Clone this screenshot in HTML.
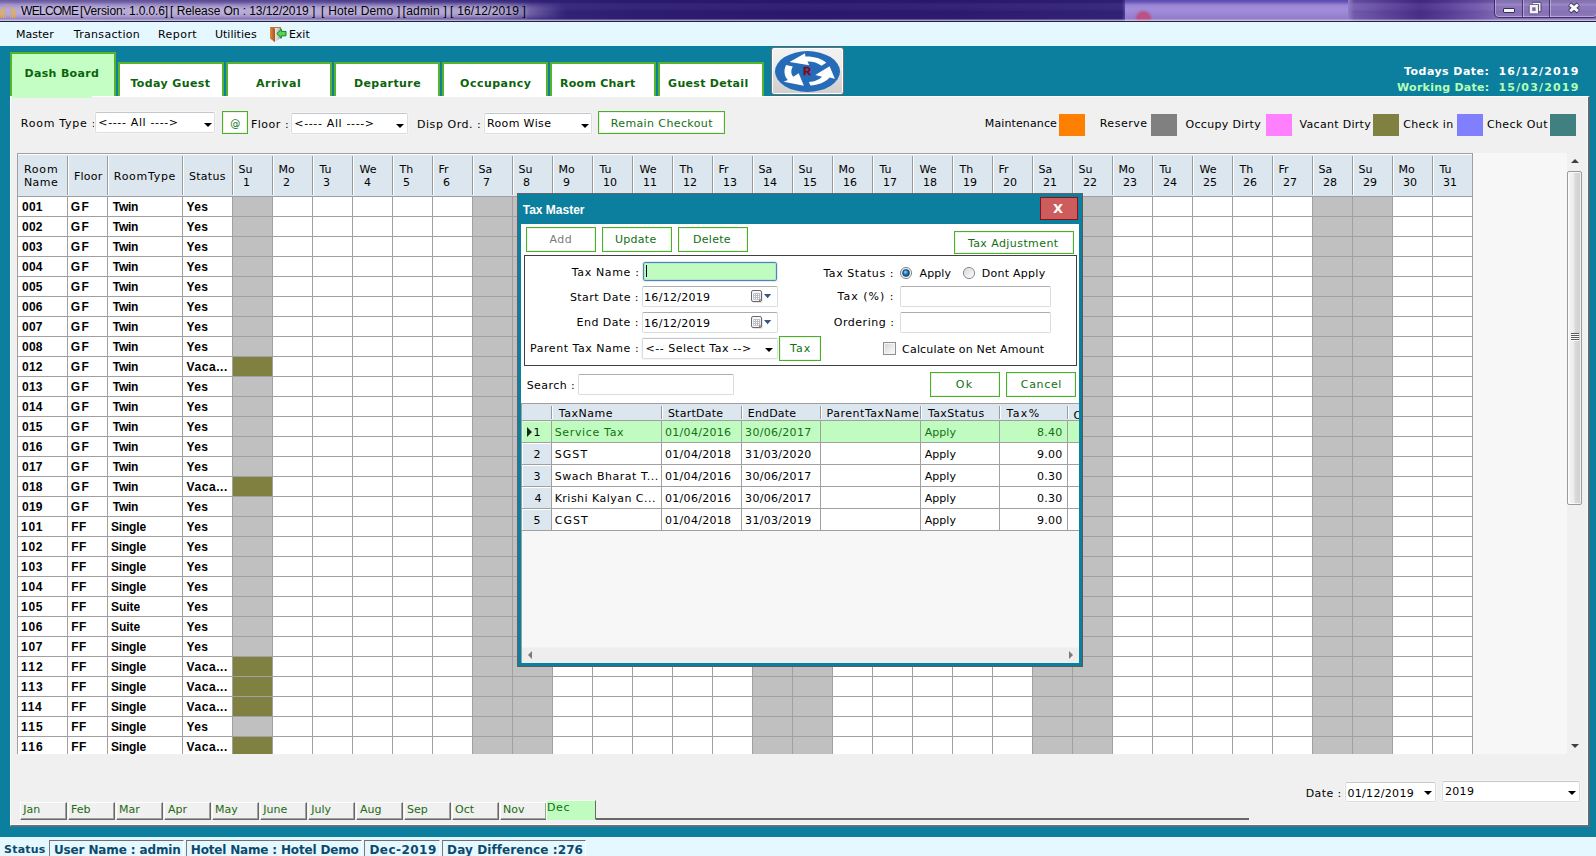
<!DOCTYPE html>
<html lang="en"><head><meta charset="utf-8"><title>WELCOME - Hotel Demo</title>
<style>
*{box-sizing:border-box;margin:0;padding:0}
html,body{width:1596px;height:856px;overflow:hidden}
body{background:#0c7e9e;font-family:"DejaVu Sans","Liberation Sans",sans-serif;font-size:11px;color:#000;position:relative}
.a{position:absolute;white-space:pre}
.t{position:absolute;white-space:pre;line-height:14px;height:14px}
.b{font-weight:bold}
.f12{font-size:12px}
.f10{font-size:10px}
.sq{transform:scaleY(.917)}
.lib{font-family:"Liberation Sans",sans-serif}
#title{left:0;top:0;width:1596px;height:21px;overflow:hidden;background:
 linear-gradient(180deg,rgba(20,10,80,.25) 0,rgba(20,10,80,.12) 3px,rgba(255,255,255,.04) 4px,rgba(255,255,255,.02) 10px,rgba(0,0,0,.06) 11px,rgba(0,0,0,.02) 21px),
 linear-gradient(90deg,#8575b8 0,#7767ad 8%,#6656a2 16%,#554595 24%,#44348a 30%,#36267e 34%,#2f1e76 40%,#2c1a70 50%,#2e1c72 60%,#33227a 68%,#35247c 70.3%,#5a45a0 70.5%,#6a4fa8 84.3%,#7a62b4 84.5%,#5b3f98 87.5%,#4b3089 89%,#5a3e98 90.5%,#7257ac 92.5%,#8870ba 94%,#8a73bb 100%)}
#tline{left:0;top:21px;width:1596px;height:1px;background:#262040}
#menu{left:0;top:22px;width:1596px;height:24px;background:#e5f7ff}
#status{left:0;top:837px;width:1596px;height:19px;background:#e5f7ff}
#panel{left:10px;top:96px;width:1580px;height:730px;background:#f0f0f0;border-right:2px solid #696969;border-right-color:#5a6a70;border-bottom:1px solid #707070;border-top:1px solid #fff;border-left:1px solid #fff;box-shadow:inset -1px -1px 0 #fafafa,0 1px 0 #4a7686}
.tab{position:absolute;top:62px;width:106px;height:35px;background:#fff;border:2px solid #57b22e;border-bottom:none}
.gbtn{position:absolute;background:#fff;border:1px solid #4caf2c;box-shadow:inset 0 0 0 1px #eaf6e4}
.combo{position:absolute;background:#fff;border:1px solid #dadde2;border-top-color:#c3c6cc;border-radius:2px;box-shadow:0 0 0 1px #f5f5f5}
.arr{position:absolute;width:0;height:0;border-left:4px solid transparent;border-right:4px solid transparent;border-top:4px solid #000}
.sw{position:absolute;width:26px;height:22px;top:114px}
#grid{left:17px;top:153px;width:1565px;height:601px;background:#f7f7f7;overflow:hidden}
.hs{position:absolute;top:3px;width:2px;height:39px;border-left:1px solid #9a9a9a;border-right:1px solid #fff}
.wk{position:absolute;top:44px;width:39px;height:560px;background:#c0c0c0}
.ol{position:absolute;left:216px;width:39px;height:19px;background:#808040}
#dlg{left:517px;top:193px;width:566px;height:474px;background:#0c7e9e;border-left:1px solid #56666c;border-top:1px solid #5f6668;border-right:1px solid #5a5a5a;border-bottom:1px solid #5a5a5a}
.inp{position:absolute;background:#fff;border:1px solid #d9dce1;border-top-color:#abadb3;border-radius:2px}
.dhs{position:absolute;top:2px;width:2px;height:13px;border-left:1px solid #9a9a9a;border-right:1px solid #fff}
.dc{position:absolute;height:22px;border-right:1px solid #a0a0a0;border-bottom:1px solid #a0a0a0;background:#fff}
.mt{position:absolute;top:802px;width:47px;height:18px;border-top:1px solid #fff;border-left:1px solid #fff;border-right:1px solid #696969;border-bottom:1px solid #696969;box-shadow:inset -1px -1px 0 #a0a0a0}
.sb{position:absolute;top:840px;height:17px;border-top:1px solid #6e6e6e;border-left:1px solid #7a7a7a;border-right:1px solid #fff}
</style></head>
<body>
<header aria-label="Window title bar">
<div class="a" id="title"></div><div class="a" id="tline"></div>
<div class="a" style="left:0;top:0;width:1596px;height:21px;overflow:hidden"><div class="a" style="left:-20px;top:5px;width:585px;height:13px;background:linear-gradient(90deg,#b9abd9 0,#b5a7d6 60%,#ad9fd0 88%,rgba(150,135,195,.5) 95%,rgba(120,105,175,0) 100%);filter:blur(2.5px)"></div><div class="a" style="left:1125px;top:0;width:223px;height:21px;background:linear-gradient(180deg,#5848b0 0,#6a58b8 2px,#9884d2 5px,#a28edb 9px,#9c88d4 13px,#917cc8 19px)"></div><div class="a" style="left:1348px;top:0;width:6px;height:21px;background:linear-gradient(90deg,#917cc8,rgba(110,85,170,0))"></div><div class="a" style="left:1137px;top:12px;width:13px;height:13px;border-radius:7px;background:#c04a7a;box-shadow:0 0 3px 1px #c04a7a;opacity:.85"></div><div class="a" style="left:0;top:19px;width:1596px;height:1px;background:rgba(225,218,245,.3)"></div><div class="a" style="left:0;top:20px;width:1596px;height:1px;background:rgba(225,218,245,.7)"></div></div>
<svg class="a" style="left:0;top:2px" width="16" height="17" viewBox="0 0 16 17"><g stroke="#f5b116" stroke-width="1"><line x1="1.5" y1="16" x2="1.5" y2="8"/><line x1="3.5" y1="16" x2="3.5" y2="6"/><line x1="12.5" y1="16" x2="12.5" y2="6"/><line x1="14.5" y1="16" x2="14.5" y2="8"/></g><g stroke="#d9a94e" stroke-width="1" opacity=".8"><line x1="5.5" y1="16" x2="5.5" y2="4"/><line x1="10.5" y1="16" x2="10.5" y2="4"/></g><rect x="6" y="2" width="1" height="1" fill="#e8b040"/><rect x="9" y="2" width="1" height="1" fill="#e8b040"/></svg>
<div class="t lib f12" style="left:21.1px;top:4px;letter-spacing:-0.70px;text-shadow:0 0 4px rgba(255,255,255,.55);">WELCOME</div>
<div class="t lib f12" style="left:80.1px;top:4px;letter-spacing:-0.12px;text-shadow:0 0 4px rgba(255,255,255,.55);">[Version: 1.0.0.6]</div>
<div class="t lib f12" style="left:170.1px;top:4px;letter-spacing:-0.06px;text-shadow:0 0 4px rgba(255,255,255,.55);">[ Release On : 13/12/2019 ]</div>
<div class="t lib f12" style="left:321.1px;top:4px;letter-spacing:0.19px;text-shadow:0 0 4px rgba(255,255,255,.55);">[ Hotel Demo ]</div>
<div class="t lib f12" style="left:402.6px;top:4px;letter-spacing:0.21px;text-shadow:0 0 4px rgba(255,255,255,.55);">[admin ]</div>
<div class="t lib f12" style="left:450.1px;top:4px;letter-spacing:0.19px;text-shadow:0 0 4px rgba(255,255,255,.55);">[ 16/12/2019 ]</div>
<div class="a" style="left:1494px;top:-5px;width:104px;height:23px;border:1px solid rgba(40,28,80,.8);border-radius:0 0 5px 5px;box-shadow:inset 0 0 0 1px rgba(255,255,255,.35);background:linear-gradient(180deg,rgba(255,255,255,.18),rgba(255,255,255,.10) 45%,rgba(255,255,255,.0) 50%,rgba(255,255,255,.08))"></div>
<div class="a" style="left:1522px;top:0;width:2px;height:17px;border-left:1px solid rgba(40,28,80,.7);border-right:1px solid rgba(255,255,255,.35)"></div><div class="a" style="left:1549px;top:0;width:2px;height:17px;border-left:1px solid rgba(40,28,80,.7);border-right:1px solid rgba(255,255,255,.35)"></div>
<div class="a" style="left:1503px;top:8px;width:12px;height:5px;background:#f4f4f4;border:1px solid #35305a;border-radius:1px"></div>
<svg class="a" style="left:1528px;top:1px" width="14" height="14" viewBox="0 0 14 14"><path d="M4.6 2.4h7.2v7.2h-1.6" fill="none" stroke="#2e2850" stroke-width="3.2" stroke-linejoin="round" opacity=".85"/><path d="M4.8 2.5h6.9v7h-1.4" fill="none" stroke="#f4f4f4" stroke-width="1.7"/><rect x="2.9" y="5" width="6" height="6.2" fill="none" stroke="#2e2850" stroke-width="4.2" stroke-linejoin="round" opacity=".85"/><rect x="2.9" y="5" width="6" height="6.2" fill="#7a66b4" stroke="#f4f4f4" stroke-width="2.6"/></svg>
<svg class="a" style="left:1567px;top:2px" width="14" height="12" viewBox="0 0 14 12"><path d="M2.6 2.2l8.8 7.4M11.4 2.2l-8.8 7.4" stroke="#2e2850" stroke-width="4.8" stroke-linecap="butt" opacity=".85"/><path d="M3.1 2.6l7.8 6.6M10.9 2.6l-7.8 6.6" stroke="#f8f8f8" stroke-width="3" stroke-linecap="butt"/></svg>
</header>
<nav aria-label="Main menu">
<div class="a" id="menu"></div>
<div class="t" style="left:15.9px;top:28px;letter-spacing:0.04px;">Master</div>
<div class="t" style="left:73.8px;top:28px;letter-spacing:0.31px;">Transaction</div>
<div class="t" style="left:158.0px;top:28px;letter-spacing:0.44px;">Report</div>
<div class="t" style="left:214.9px;top:28px;letter-spacing:0.04px;">Utilities</div>
<div class="t" style="left:288.9px;top:28px;">Exit</div>
<svg class="a" style="left:269px;top:26px" width="18" height="17" viewBox="0 0 18 17"><defs><linearGradient id="dg" x1="0" y1="0" x2="1" y2="0"><stop offset="0" stop-color="#f4f6f8"/><stop offset="1" stop-color="#aab4be"/></linearGradient><linearGradient id="dd" x1="0" y1="0" x2="1" y2="0"><stop offset="0" stop-color="#e08a3c"/><stop offset="1" stop-color="#a8541a"/></linearGradient></defs><rect x="1" y="1" width="11" height="11.6" fill="#d0742c"/><path d="M5 2h6v10.6l-5 3.4-1-.4z" fill="url(#dg)"/><path d="M1 1l5 1.6v13.6L1 12.6z" fill="url(#dd)"/><path d="M17 5.4h-4.6V3.2L7.8 7.6l4.6 4.4V9.8H17z" fill="#5fd05a" stroke="#0a8a12" stroke-width="1"/></svg>
</nav>
<section aria-label="Tabs and dates">
<div class="tab" style="left:10px;top:52px;width:106px;height:46px;background:#c5fec5"></div>
<div class="tab" style="left:118px"></div>
<div class="tab" style="left:226px"></div>
<div class="tab" style="left:334px"></div>
<div class="tab" style="left:442px"></div>
<div class="tab" style="left:550px"></div>
<div class="tab" style="left:658px"></div>
<div class="t b" style="left:24.6px;top:67px;letter-spacing:0.31px;color:#0b640b;">Dash Board</div>
<div class="t b" style="left:130.4px;top:77px;letter-spacing:0.40px;color:#0b640b;">Today Guest</div>
<div class="t b" style="left:255.9px;top:77px;letter-spacing:0.58px;color:#0b640b;">Arrival</div>
<div class="t b" style="left:353.9px;top:77px;letter-spacing:0.44px;color:#0b640b;">Departure</div>
<div class="t b" style="left:460.1px;top:77px;letter-spacing:0.47px;color:#0b640b;">Occupancy</div>
<div class="t b" style="left:560.1px;top:77px;letter-spacing:0.25px;color:#0b640b;">Room Chart</div>
<div class="t b" style="left:668.1px;top:77px;letter-spacing:0.30px;color:#0b640b;">Guest Detail</div>
<div class="a" style="left:771px;top:47px;width:73px;height:48px;border:1px solid #707070;border-radius:3px;background:linear-gradient(180deg,#f2f2f2 0,#ebebeb 48%,#dddddd 52%,#cfcfcf 100%);box-shadow:inset 0 0 0 1px #fcfcfc"></div>
<svg class="a" style="left:774px;top:49.7px" width="67" height="43" viewBox="0 0 67 43"><ellipse cx="33.5" cy="21.5" rx="32.5" ry="20.4" fill="#256bb7"/><g fill="#fff"><path d="M15.6 12 L31 3.3 L31.4 6.5 C40 6.3 47.5 8.5 52.3 12.8 L47.5 15.7 C43.5 12.6 38.5 11.2 33.4 11.4 L35.3 15.3 Z"/><path d="M55.6 16.2 L60.9 28.8 L55.6 27.6 C51.5 32.5 44 35.2 36.4 35.5 L34.9 32 C40.5 31.5 45.5 29.5 48 26.7 L41.3 25 Z"/><path d="M29.9 35.8 L9.7 31.7 L13.8 29.9 C10 26 9.5 20 12.1 15 L18.8 16.5 C16.5 20.5 17 24.5 19.4 26.7 L24.7 23.2 Z"/></g><text x="29.2" y="25.4" font-family="Liberation Sans,sans-serif" font-weight="bold" font-size="10.6" fill="#85081a" stroke="#85081a" stroke-width=".5">R</text></svg>
<div class="t b" style="left:1404.1px;top:65px;letter-spacing:0.45px;color:#fff;">Todays Date:</div>
<div class="t b" style="left:1498.5px;top:65px;letter-spacing:1.17px;color:#fff;">16/12/2019</div>
<div class="t b" style="left:1397.1px;top:81px;letter-spacing:0.25px;color:#b4ffb4;">Working Date:</div>
<div class="t b" style="left:1498.5px;top:81px;letter-spacing:1.17px;color:#b4ffb4;">15/03/2019</div>
</section>
<main aria-label="Dash Board">
<div class="a" id="panel"></div>
<div class="a" style="left:12px;top:96px;width:80px;height:2px;background:#c5fec5"></div>
<div class="t" style="left:20.8px;top:117px;letter-spacing:0.74px;">Room Type :</div>
<div class="combo" style="left:95px;top:112px;width:120px;height:21px"></div><div class="arr" style="left:204px;top:123px"></div>
<div class="t" style="left:98.3px;top:116px;letter-spacing:0.64px;">&lt;---- All ----&gt;</div>
<div class="gbtn" style="left:222px;top:111px;width:26px;height:23px"></div>
<div class="t f10" style="left:230.2px;top:117px;color:#127012;">@</div>
<div class="t" style="left:250.9px;top:118px;letter-spacing:0.53px;">Floor :</div>
<div class="combo" style="left:291px;top:113px;width:117px;height:21px"></div><div class="arr" style="left:396px;top:124px"></div>
<div class="t" style="left:294.3px;top:117px;letter-spacing:0.64px;">&lt;---- All ----&gt;</div>
<div class="t" style="left:417.0px;top:118px;letter-spacing:0.54px;">Disp Ord. :</div>
<div class="combo" style="left:484px;top:113px;width:108px;height:21px"></div><div class="arr" style="left:581px;top:124px"></div>
<div class="t" style="left:486.9px;top:117px;letter-spacing:0.38px;">Room Wise</div>
<div class="gbtn" style="left:598px;top:111px;width:127px;height:23px"></div>
<div class="t" style="left:610.7px;top:117px;letter-spacing:0.39px;color:#127012;">Remain Checkout</div>
<div class="t" style="left:984.8px;top:117px;letter-spacing:0.12px;">Maintenance</div>
<div class="sw" style="left:1059px;background:#ff8000"></div>
<div class="t" style="left:1099.7px;top:117px;letter-spacing:0.52px;">Reserve</div>
<div class="sw" style="left:1151px;background:#808080"></div>
<div class="t" style="left:1185.5px;top:118px;letter-spacing:0.33px;">Occupy Dirty</div>
<div class="sw" style="left:1266px;background:#ff80ff"></div>
<div class="t" style="left:1299.6px;top:118px;letter-spacing:0.30px;">Vacant Dirty</div>
<div class="sw" style="left:1373px;background:#808040"></div>
<div class="t" style="left:1403.2px;top:118px;letter-spacing:0.37px;">Check in</div>
<div class="sw" style="left:1457px;background:#8080ff"></div>
<div class="t" style="left:1486.9px;top:118px;letter-spacing:0.41px;">Check Out</div>
<div class="sw" style="left:1550px;background:#408080"></div>
<div class="a" id="grid">
<div class="a" style="left:0;top:0;width:1456px;height:44px;background:#dce6ee;border-top:1px solid #a0a0a0;box-shadow:inset 0 1px 0 #fff"></div>
<div class="a" style="left:0;top:44px;width:1456px;height:560px;background:#fff"></div>
<div class="wk" style="left:216px"></div>
<div class="wk" style="left:456px"></div>
<div class="wk" style="left:496px"></div>
<div class="wk" style="left:736px"></div>
<div class="wk" style="left:776px"></div>
<div class="wk" style="left:1016px"></div>
<div class="wk" style="left:1056px"></div>
<div class="wk" style="left:1296px"></div>
<div class="wk" style="left:1336px"></div>
<div class="ol" style="top:204px"></div>
<div class="ol" style="top:324px"></div>
<div class="ol" style="top:504px"></div>
<div class="ol" style="top:524px"></div>
<div class="ol" style="top:544px"></div>
<div class="ol" style="top:584px"></div>
<div class="a" style="left:0;top:43px;width:1456px;height:561px;background-image:linear-gradient(180deg,#a0a0a0 1px,transparent 1px);background-size:100% 20px"></div>
<div class="a" style="left:0;top:0;width:1px;height:604px;background:#a0a0a0"></div>
<div class="a" style="left:50px;top:44px;width:1px;height:560px;background:#a0a0a0"></div>
<div class="hs" style="left:50px"></div>
<div class="a" style="left:90px;top:44px;width:1px;height:560px;background:#a0a0a0"></div>
<div class="hs" style="left:90px"></div>
<div class="a" style="left:165px;top:44px;width:1px;height:560px;background:#a0a0a0"></div>
<div class="hs" style="left:165px"></div>
<div class="a" style="left:215px;top:44px;width:1px;height:560px;background:#a0a0a0"></div>
<div class="hs" style="left:215px"></div>
<div class="a" style="left:255px;top:44px;width:1px;height:560px;background:#a0a0a0"></div>
<div class="hs" style="left:255px"></div>
<div class="a" style="left:295px;top:44px;width:1px;height:560px;background:#a0a0a0"></div>
<div class="hs" style="left:295px"></div>
<div class="a" style="left:335px;top:44px;width:1px;height:560px;background:#a0a0a0"></div>
<div class="hs" style="left:335px"></div>
<div class="a" style="left:375px;top:44px;width:1px;height:560px;background:#a0a0a0"></div>
<div class="hs" style="left:375px"></div>
<div class="a" style="left:415px;top:44px;width:1px;height:560px;background:#a0a0a0"></div>
<div class="hs" style="left:415px"></div>
<div class="a" style="left:455px;top:44px;width:1px;height:560px;background:#a0a0a0"></div>
<div class="hs" style="left:455px"></div>
<div class="a" style="left:495px;top:44px;width:1px;height:560px;background:#a0a0a0"></div>
<div class="hs" style="left:495px"></div>
<div class="a" style="left:535px;top:44px;width:1px;height:560px;background:#a0a0a0"></div>
<div class="hs" style="left:535px"></div>
<div class="a" style="left:575px;top:44px;width:1px;height:560px;background:#a0a0a0"></div>
<div class="hs" style="left:575px"></div>
<div class="a" style="left:615px;top:44px;width:1px;height:560px;background:#a0a0a0"></div>
<div class="hs" style="left:615px"></div>
<div class="a" style="left:655px;top:44px;width:1px;height:560px;background:#a0a0a0"></div>
<div class="hs" style="left:655px"></div>
<div class="a" style="left:695px;top:44px;width:1px;height:560px;background:#a0a0a0"></div>
<div class="hs" style="left:695px"></div>
<div class="a" style="left:735px;top:44px;width:1px;height:560px;background:#a0a0a0"></div>
<div class="hs" style="left:735px"></div>
<div class="a" style="left:775px;top:44px;width:1px;height:560px;background:#a0a0a0"></div>
<div class="hs" style="left:775px"></div>
<div class="a" style="left:815px;top:44px;width:1px;height:560px;background:#a0a0a0"></div>
<div class="hs" style="left:815px"></div>
<div class="a" style="left:855px;top:44px;width:1px;height:560px;background:#a0a0a0"></div>
<div class="hs" style="left:855px"></div>
<div class="a" style="left:895px;top:44px;width:1px;height:560px;background:#a0a0a0"></div>
<div class="hs" style="left:895px"></div>
<div class="a" style="left:935px;top:44px;width:1px;height:560px;background:#a0a0a0"></div>
<div class="hs" style="left:935px"></div>
<div class="a" style="left:975px;top:44px;width:1px;height:560px;background:#a0a0a0"></div>
<div class="hs" style="left:975px"></div>
<div class="a" style="left:1015px;top:44px;width:1px;height:560px;background:#a0a0a0"></div>
<div class="hs" style="left:1015px"></div>
<div class="a" style="left:1055px;top:44px;width:1px;height:560px;background:#a0a0a0"></div>
<div class="hs" style="left:1055px"></div>
<div class="a" style="left:1095px;top:44px;width:1px;height:560px;background:#a0a0a0"></div>
<div class="hs" style="left:1095px"></div>
<div class="a" style="left:1135px;top:44px;width:1px;height:560px;background:#a0a0a0"></div>
<div class="hs" style="left:1135px"></div>
<div class="a" style="left:1175px;top:44px;width:1px;height:560px;background:#a0a0a0"></div>
<div class="hs" style="left:1175px"></div>
<div class="a" style="left:1215px;top:44px;width:1px;height:560px;background:#a0a0a0"></div>
<div class="hs" style="left:1215px"></div>
<div class="a" style="left:1255px;top:44px;width:1px;height:560px;background:#a0a0a0"></div>
<div class="hs" style="left:1255px"></div>
<div class="a" style="left:1295px;top:44px;width:1px;height:560px;background:#a0a0a0"></div>
<div class="hs" style="left:1295px"></div>
<div class="a" style="left:1335px;top:44px;width:1px;height:560px;background:#a0a0a0"></div>
<div class="hs" style="left:1335px"></div>
<div class="a" style="left:1375px;top:44px;width:1px;height:560px;background:#a0a0a0"></div>
<div class="hs" style="left:1375px"></div>
<div class="a" style="left:1415px;top:44px;width:1px;height:560px;background:#a0a0a0"></div>
<div class="hs" style="left:1415px"></div>
<div class="a" style="left:1455px;top:44px;width:1px;height:560px;background:#a0a0a0"></div>
<div class="a" style="left:1455px;top:0;width:1px;height:44px;background:#a0a0a0"></div>
</div>
<div class="t" style="left:23.9px;top:163px;letter-spacing:0.80px;">Room</div>
<div class="t" style="left:23.9px;top:176px;letter-spacing:0.50px;">Name</div>
<div class="t" style="left:73.9px;top:170px;letter-spacing:0.28px;">Floor</div>
<div class="t" style="left:113.8px;top:170px;letter-spacing:0.71px;">RoomType</div>
<div class="t" style="left:188.9px;top:170px;letter-spacing:0.30px;">Status</div>
<div class="t" style="left:238.5px;top:163px;">Su</div>
<div class="t" style="left:242.9px;top:176px;">1</div>
<div class="t" style="left:278.5px;top:163px;">Mo</div>
<div class="t" style="left:282.9px;top:176px;">2</div>
<div class="t" style="left:319.5px;top:163px;">Tu</div>
<div class="t" style="left:322.9px;top:176px;">3</div>
<div class="t" style="left:359.5px;top:163px;">We</div>
<div class="t" style="left:363.9px;top:176px;">4</div>
<div class="t" style="left:399.5px;top:163px;">Th</div>
<div class="t" style="left:402.9px;top:176px;">5</div>
<div class="t" style="left:438.5px;top:163px;">Fr</div>
<div class="t" style="left:442.9px;top:176px;">6</div>
<div class="t" style="left:478.5px;top:163px;">Sa</div>
<div class="t" style="left:482.9px;top:176px;">7</div>
<div class="t" style="left:518.5px;top:163px;">Su</div>
<div class="t" style="left:522.9px;top:176px;">8</div>
<div class="t" style="left:558.5px;top:163px;">Mo</div>
<div class="t" style="left:562.9px;top:176px;">9</div>
<div class="t" style="left:599.5px;top:163px;">Tu</div>
<div class="t" style="left:602.9px;top:176px;">10</div>
<div class="t" style="left:639.5px;top:163px;">We</div>
<div class="t" style="left:642.9px;top:176px;">11</div>
<div class="t" style="left:679.5px;top:163px;">Th</div>
<div class="t" style="left:682.9px;top:176px;">12</div>
<div class="t" style="left:718.5px;top:163px;">Fr</div>
<div class="t" style="left:722.9px;top:176px;">13</div>
<div class="t" style="left:758.5px;top:163px;">Sa</div>
<div class="t" style="left:762.9px;top:176px;">14</div>
<div class="t" style="left:798.5px;top:163px;">Su</div>
<div class="t" style="left:802.9px;top:176px;">15</div>
<div class="t" style="left:838.5px;top:163px;">Mo</div>
<div class="t" style="left:842.9px;top:176px;">16</div>
<div class="t" style="left:879.5px;top:163px;">Tu</div>
<div class="t" style="left:882.9px;top:176px;">17</div>
<div class="t" style="left:919.5px;top:163px;">We</div>
<div class="t" style="left:922.9px;top:176px;">18</div>
<div class="t" style="left:959.5px;top:163px;">Th</div>
<div class="t" style="left:962.9px;top:176px;">19</div>
<div class="t" style="left:998.5px;top:163px;">Fr</div>
<div class="t" style="left:1002.9px;top:176px;">20</div>
<div class="t" style="left:1038.5px;top:163px;">Sa</div>
<div class="t" style="left:1042.9px;top:176px;">21</div>
<div class="t" style="left:1078.5px;top:163px;">Su</div>
<div class="t" style="left:1082.9px;top:176px;">22</div>
<div class="t" style="left:1118.5px;top:163px;">Mo</div>
<div class="t" style="left:1122.9px;top:176px;">23</div>
<div class="t" style="left:1159.5px;top:163px;">Tu</div>
<div class="t" style="left:1162.9px;top:176px;">24</div>
<div class="t" style="left:1199.5px;top:163px;">We</div>
<div class="t" style="left:1202.9px;top:176px;">25</div>
<div class="t" style="left:1239.5px;top:163px;">Th</div>
<div class="t" style="left:1242.9px;top:176px;">26</div>
<div class="t" style="left:1278.5px;top:163px;">Fr</div>
<div class="t" style="left:1282.9px;top:176px;">27</div>
<div class="t" style="left:1318.5px;top:163px;">Sa</div>
<div class="t" style="left:1322.9px;top:176px;">28</div>
<div class="t" style="left:1358.5px;top:163px;">Su</div>
<div class="t" style="left:1362.9px;top:176px;">29</div>
<div class="t" style="left:1398.5px;top:163px;">Mo</div>
<div class="t" style="left:1402.9px;top:176px;">30</div>
<div class="t" style="left:1439.5px;top:163px;">Tu</div>
<div class="t" style="left:1442.9px;top:176px;">31</div>
<div class="t lib b f12" style="left:22.1px;top:200px;letter-spacing:0.15px;">001</div>
<div class="t lib b f12" style="left:70.8px;top:200px;letter-spacing:1.30px;">GF</div>
<div class="t lib b f12" style="left:112.8px;top:200px;letter-spacing:-0.27px;">Twin</div>
<div class="t lib b f12" style="left:186.5px;top:200px;letter-spacing:0.40px;">Yes</div>
<div class="t lib b f12" style="left:22.1px;top:220px;letter-spacing:0.15px;">002</div>
<div class="t lib b f12" style="left:70.8px;top:220px;letter-spacing:1.30px;">GF</div>
<div class="t lib b f12" style="left:112.8px;top:220px;letter-spacing:-0.27px;">Twin</div>
<div class="t lib b f12" style="left:186.5px;top:220px;letter-spacing:0.40px;">Yes</div>
<div class="t lib b f12" style="left:22.1px;top:240px;letter-spacing:0.15px;">003</div>
<div class="t lib b f12" style="left:70.8px;top:240px;letter-spacing:1.30px;">GF</div>
<div class="t lib b f12" style="left:112.8px;top:240px;letter-spacing:-0.27px;">Twin</div>
<div class="t lib b f12" style="left:186.5px;top:240px;letter-spacing:0.40px;">Yes</div>
<div class="t lib b f12" style="left:22.1px;top:260px;letter-spacing:0.15px;">004</div>
<div class="t lib b f12" style="left:70.8px;top:260px;letter-spacing:1.30px;">GF</div>
<div class="t lib b f12" style="left:112.8px;top:260px;letter-spacing:-0.27px;">Twin</div>
<div class="t lib b f12" style="left:186.5px;top:260px;letter-spacing:0.40px;">Yes</div>
<div class="t lib b f12" style="left:22.1px;top:280px;letter-spacing:0.15px;">005</div>
<div class="t lib b f12" style="left:70.8px;top:280px;letter-spacing:1.30px;">GF</div>
<div class="t lib b f12" style="left:112.8px;top:280px;letter-spacing:-0.27px;">Twin</div>
<div class="t lib b f12" style="left:186.5px;top:280px;letter-spacing:0.40px;">Yes</div>
<div class="t lib b f12" style="left:22.1px;top:300px;letter-spacing:0.15px;">006</div>
<div class="t lib b f12" style="left:70.8px;top:300px;letter-spacing:1.30px;">GF</div>
<div class="t lib b f12" style="left:112.8px;top:300px;letter-spacing:-0.27px;">Twin</div>
<div class="t lib b f12" style="left:186.5px;top:300px;letter-spacing:0.40px;">Yes</div>
<div class="t lib b f12" style="left:22.1px;top:320px;letter-spacing:0.15px;">007</div>
<div class="t lib b f12" style="left:70.8px;top:320px;letter-spacing:1.30px;">GF</div>
<div class="t lib b f12" style="left:112.8px;top:320px;letter-spacing:-0.27px;">Twin</div>
<div class="t lib b f12" style="left:186.5px;top:320px;letter-spacing:0.40px;">Yes</div>
<div class="t lib b f12" style="left:22.1px;top:340px;letter-spacing:0.15px;">008</div>
<div class="t lib b f12" style="left:70.8px;top:340px;letter-spacing:1.30px;">GF</div>
<div class="t lib b f12" style="left:112.8px;top:340px;letter-spacing:-0.27px;">Twin</div>
<div class="t lib b f12" style="left:186.5px;top:340px;letter-spacing:0.40px;">Yes</div>
<div class="t lib b f12" style="left:22.1px;top:360px;letter-spacing:0.15px;">012</div>
<div class="t lib b f12" style="left:70.8px;top:360px;letter-spacing:1.30px;">GF</div>
<div class="t lib b f12" style="left:112.8px;top:360px;letter-spacing:-0.27px;">Twin</div>
<div class="t lib b f12" style="left:186.5px;top:360px;letter-spacing:0.58px;">Vaca...</div>
<div class="t lib b f12" style="left:22.1px;top:380px;letter-spacing:0.15px;">013</div>
<div class="t lib b f12" style="left:70.8px;top:380px;letter-spacing:1.30px;">GF</div>
<div class="t lib b f12" style="left:112.8px;top:380px;letter-spacing:-0.27px;">Twin</div>
<div class="t lib b f12" style="left:186.5px;top:380px;letter-spacing:0.40px;">Yes</div>
<div class="t lib b f12" style="left:22.1px;top:400px;letter-spacing:0.15px;">014</div>
<div class="t lib b f12" style="left:70.8px;top:400px;letter-spacing:1.30px;">GF</div>
<div class="t lib b f12" style="left:112.8px;top:400px;letter-spacing:-0.27px;">Twin</div>
<div class="t lib b f12" style="left:186.5px;top:400px;letter-spacing:0.40px;">Yes</div>
<div class="t lib b f12" style="left:22.1px;top:420px;letter-spacing:0.15px;">015</div>
<div class="t lib b f12" style="left:70.8px;top:420px;letter-spacing:1.30px;">GF</div>
<div class="t lib b f12" style="left:112.8px;top:420px;letter-spacing:-0.27px;">Twin</div>
<div class="t lib b f12" style="left:186.5px;top:420px;letter-spacing:0.40px;">Yes</div>
<div class="t lib b f12" style="left:22.1px;top:440px;letter-spacing:0.15px;">016</div>
<div class="t lib b f12" style="left:70.8px;top:440px;letter-spacing:1.30px;">GF</div>
<div class="t lib b f12" style="left:112.8px;top:440px;letter-spacing:-0.27px;">Twin</div>
<div class="t lib b f12" style="left:186.5px;top:440px;letter-spacing:0.40px;">Yes</div>
<div class="t lib b f12" style="left:22.1px;top:460px;letter-spacing:0.15px;">017</div>
<div class="t lib b f12" style="left:70.8px;top:460px;letter-spacing:1.30px;">GF</div>
<div class="t lib b f12" style="left:112.8px;top:460px;letter-spacing:-0.27px;">Twin</div>
<div class="t lib b f12" style="left:186.5px;top:460px;letter-spacing:0.40px;">Yes</div>
<div class="t lib b f12" style="left:22.1px;top:480px;letter-spacing:0.15px;">018</div>
<div class="t lib b f12" style="left:70.8px;top:480px;letter-spacing:1.30px;">GF</div>
<div class="t lib b f12" style="left:112.8px;top:480px;letter-spacing:-0.27px;">Twin</div>
<div class="t lib b f12" style="left:186.5px;top:480px;letter-spacing:0.58px;">Vaca...</div>
<div class="t lib b f12" style="left:22.1px;top:500px;letter-spacing:0.15px;">019</div>
<div class="t lib b f12" style="left:70.8px;top:500px;letter-spacing:1.30px;">GF</div>
<div class="t lib b f12" style="left:112.8px;top:500px;letter-spacing:-0.27px;">Twin</div>
<div class="t lib b f12" style="left:186.5px;top:500px;letter-spacing:0.40px;">Yes</div>
<div class="t lib b f12" style="left:21.1px;top:520px;letter-spacing:0.65px;">101</div>
<div class="t lib b f12" style="left:71.2px;top:520px;letter-spacing:0.50px;">FF</div>
<div class="t lib b f12" style="left:110.9px;top:520px;letter-spacing:-0.16px;">Single</div>
<div class="t lib b f12" style="left:186.5px;top:520px;letter-spacing:0.40px;">Yes</div>
<div class="t lib b f12" style="left:21.1px;top:540px;letter-spacing:0.65px;">102</div>
<div class="t lib b f12" style="left:71.2px;top:540px;letter-spacing:0.50px;">FF</div>
<div class="t lib b f12" style="left:110.9px;top:540px;letter-spacing:-0.16px;">Single</div>
<div class="t lib b f12" style="left:186.5px;top:540px;letter-spacing:0.40px;">Yes</div>
<div class="t lib b f12" style="left:21.1px;top:560px;letter-spacing:0.65px;">103</div>
<div class="t lib b f12" style="left:71.2px;top:560px;letter-spacing:0.50px;">FF</div>
<div class="t lib b f12" style="left:110.9px;top:560px;letter-spacing:-0.16px;">Single</div>
<div class="t lib b f12" style="left:186.5px;top:560px;letter-spacing:0.40px;">Yes</div>
<div class="t lib b f12" style="left:21.1px;top:580px;letter-spacing:0.65px;">104</div>
<div class="t lib b f12" style="left:71.2px;top:580px;letter-spacing:0.50px;">FF</div>
<div class="t lib b f12" style="left:110.9px;top:580px;letter-spacing:-0.16px;">Single</div>
<div class="t lib b f12" style="left:186.5px;top:580px;letter-spacing:0.40px;">Yes</div>
<div class="t lib b f12" style="left:21.1px;top:600px;letter-spacing:0.65px;">105</div>
<div class="t lib b f12" style="left:71.2px;top:600px;letter-spacing:0.50px;">FF</div>
<div class="t lib b f12" style="left:110.9px;top:600px;">Suite</div>
<div class="t lib b f12" style="left:186.5px;top:600px;letter-spacing:0.40px;">Yes</div>
<div class="t lib b f12" style="left:21.1px;top:620px;letter-spacing:0.65px;">106</div>
<div class="t lib b f12" style="left:71.2px;top:620px;letter-spacing:0.50px;">FF</div>
<div class="t lib b f12" style="left:110.9px;top:620px;">Suite</div>
<div class="t lib b f12" style="left:186.5px;top:620px;letter-spacing:0.40px;">Yes</div>
<div class="t lib b f12" style="left:21.1px;top:640px;letter-spacing:0.65px;">107</div>
<div class="t lib b f12" style="left:71.2px;top:640px;letter-spacing:0.50px;">FF</div>
<div class="t lib b f12" style="left:110.9px;top:640px;letter-spacing:-0.16px;">Single</div>
<div class="t lib b f12" style="left:186.5px;top:640px;letter-spacing:0.40px;">Yes</div>
<div class="t lib b f12" style="left:21.1px;top:660px;letter-spacing:1.15px;">112</div>
<div class="t lib b f12" style="left:71.2px;top:660px;letter-spacing:0.50px;">FF</div>
<div class="t lib b f12" style="left:110.9px;top:660px;letter-spacing:-0.16px;">Single</div>
<div class="t lib b f12" style="left:186.5px;top:660px;letter-spacing:0.58px;">Vaca...</div>
<div class="t lib b f12" style="left:21.1px;top:680px;letter-spacing:1.15px;">113</div>
<div class="t lib b f12" style="left:71.2px;top:680px;letter-spacing:0.50px;">FF</div>
<div class="t lib b f12" style="left:110.9px;top:680px;letter-spacing:-0.16px;">Single</div>
<div class="t lib b f12" style="left:186.5px;top:680px;letter-spacing:0.58px;">Vaca...</div>
<div class="t lib b f12" style="left:21.1px;top:700px;letter-spacing:0.65px;">114</div>
<div class="t lib b f12" style="left:71.2px;top:700px;letter-spacing:0.50px;">FF</div>
<div class="t lib b f12" style="left:110.9px;top:700px;letter-spacing:-0.16px;">Single</div>
<div class="t lib b f12" style="left:186.5px;top:700px;letter-spacing:0.58px;">Vaca...</div>
<div class="t lib b f12" style="left:21.1px;top:720px;letter-spacing:1.15px;">115</div>
<div class="t lib b f12" style="left:71.2px;top:720px;letter-spacing:0.50px;">FF</div>
<div class="t lib b f12" style="left:110.9px;top:720px;letter-spacing:-0.16px;">Single</div>
<div class="t lib b f12" style="left:186.5px;top:720px;letter-spacing:0.40px;">Yes</div>
<div class="t lib b f12" style="left:21.1px;top:740px;letter-spacing:1.15px;">116</div>
<div class="t lib b f12" style="left:71.2px;top:740px;letter-spacing:0.50px;">FF</div>
<div class="t lib b f12" style="left:110.9px;top:740px;letter-spacing:-0.16px;">Single</div>
<div class="t lib b f12" style="left:186.5px;top:740px;letter-spacing:0.58px;">Vaca...</div>
<div class="a" style="left:1567px;top:153px;width:15px;height:601px;background:#f0f0f0"></div>
<div class="a" style="left:1567px;top:171px;width:15px;height:334px;border:1px solid #9a9a9a;border-radius:2px;background:linear-gradient(90deg,#f6f6f6 0,#ececec 45%,#d9d9d9 55%,#d0d0d0 100%);box-shadow:inset 0 0 0 1px rgba(255,255,255,.7)"></div>
<div class="a" style="left:1571px;top:333px;width:8px;height:8px;background:repeating-linear-gradient(180deg,#5a5a5a 0,#5a5a5a 1px,#fafafa 1px,#fafafa 2px)"></div>
<div class="a" style="left:1571px;top:159px;width:0;height:0;border-left:4px solid transparent;border-right:4px solid transparent;border-bottom:4px solid #404040"></div>
<div class="a" style="left:1571px;top:744px;width:0;height:0;border-left:4px solid transparent;border-right:4px solid transparent;border-top:4px solid #404040"></div>
<div class="a" style="left:596px;top:818px;width:653px;height:2px;background:#696969"></div>
<div class="mt" style="left:20px"></div>
<div class="t" style="left:23.2px;top:803px;color:#1e6a10;">Jan</div>
<div class="mt" style="left:68px"></div>
<div class="t" style="left:71.0px;top:803px;color:#1e6a10;">Feb</div>
<div class="mt" style="left:116px"></div>
<div class="t" style="left:119.0px;top:803px;color:#1e6a10;">Mar</div>
<div class="mt" style="left:164px"></div>
<div class="t" style="left:168.0px;top:803px;color:#1e6a10;">Apr</div>
<div class="mt" style="left:212px"></div>
<div class="t" style="left:215.0px;top:803px;color:#1e6a10;">May</div>
<div class="mt" style="left:260px"></div>
<div class="t" style="left:263.2px;top:803px;color:#1e6a10;">June</div>
<div class="mt" style="left:308px"></div>
<div class="t" style="left:311.2px;top:803px;color:#1e6a10;">July</div>
<div class="mt" style="left:356px"></div>
<div class="t" style="left:360.0px;top:803px;color:#1e6a10;">Aug</div>
<div class="mt" style="left:404px"></div>
<div class="t" style="left:407.0px;top:803px;color:#1e6a10;">Sep</div>
<div class="mt" style="left:452px"></div>
<div class="t" style="left:455.0px;top:803px;color:#1e6a10;">Oct</div>
<div class="mt" style="left:500px"></div>
<div class="t" style="left:503.0px;top:803px;color:#1e6a10;">Nov</div>
<div class="mt" style="left:546px;top:800px;width:50px;height:20px;background:#c0fcc0;border-top-color:#f0fff0;border-left-color:#f0fff0;border-bottom-color:#c0fcc0;box-shadow:none"></div>
<div class="t" style="left:546.9px;top:801px;letter-spacing:0.65px;color:#127012;">Dec</div>
<div class="t" style="left:1305.7px;top:787px;letter-spacing:0.40px;">Date :</div>
<div class="combo" style="left:1345px;top:782px;width:91px;height:20px"></div><div class="arr" style="left:1424px;top:791px"></div>
<div class="t" style="left:1347.4px;top:787px;letter-spacing:0.33px;">01/12/2019</div>
<div class="combo" style="left:1442px;top:781px;width:138px;height:21px"></div><div class="arr" style="left:1568px;top:791px"></div>
<div class="t" style="left:1444.9px;top:785px;letter-spacing:0.33px;">2019</div>
</main>
<footer aria-label="Status bar">
<div class="a" id="status"></div>
<div class="t b" style="left:4.1px;top:843px;letter-spacing:0.20px;color:#0a4b6c;">Status</div>
<div class="sb" style="left:49px;width:135px"></div>
<div class="t b f12" style="left:53.9px;top:843px;letter-spacing:-0.12px;color:#0a4b6c;">User Name : admin</div>
<div class="sb" style="left:186px;width:176px"></div>
<div class="t b f12" style="left:190.8px;top:843px;letter-spacing:-0.17px;color:#0a4b6c;">Hotel Name : Hotel Demo</div>
<div class="sb" style="left:364px;width:76px"></div>
<div class="t b f12" style="left:369.4px;top:843px;letter-spacing:0.47px;color:#0a4b6c;">Dec-2019</div>
<div class="sb" style="left:442px;width:144px"></div>
<div class="t b f12" style="left:447.1px;top:843px;letter-spacing:0.09px;color:#0a4b6c;">Day Difference :276</div>
</footer>
<section role="dialog" aria-label="Tax Master">
<div class="a" id="dlg"></div>
<div class="t lib b f12" style="left:522.7px;top:203px;color:#fff;">Tax Master</div>
<div class="a" style="left:1040px;top:197px;width:38px;height:23px;background:#cd5c5c;border:1px solid #8b1212"></div>
<div class="t b f12" style="left:1053.0px;top:202px;color:#fff;font-size:13px;">X</div>
<div class="a" style="left:521px;top:224px;width:558px;height:180px;background:#fff"></div>
<div class="gbtn" style="left:526px;top:227px;width:70px;height:25px"></div>
<div class="t" style="left:549.6px;top:233px;letter-spacing:0.40px;color:#7a7a7a;">Add</div>
<div class="gbtn" style="left:602px;top:227px;width:70px;height:25px"></div>
<div class="t" style="left:614.9px;top:233px;letter-spacing:0.30px;color:#127012;">Update</div>
<div class="gbtn" style="left:678px;top:227px;width:70px;height:25px"></div>
<div class="t" style="left:693.1px;top:233px;letter-spacing:0.25px;color:#127012;">Delete</div>
<div class="gbtn" style="left:954px;top:231px;width:120px;height:23px"></div>
<div class="t" style="left:967.9px;top:237px;letter-spacing:0.42px;color:#127012;">Tax Adjustment</div>
<div class="a" style="left:524px;top:255px;width:553px;height:111px;border:1px solid #404040"></div>
<div class="t" style="left:571.8px;top:266px;letter-spacing:0.64px;">Tax Name :</div>
<div class="t" style="left:569.9px;top:291px;letter-spacing:0.43px;">Start Date :</div>
<div class="t" style="left:576.6px;top:316px;letter-spacing:0.44px;">End Date :</div>
<div class="t" style="left:530.1px;top:342px;letter-spacing:0.53px;">Parent Tax Name :</div>
<div class="t" style="left:823.4px;top:267px;letter-spacing:0.56px;">Tax Status :</div>
<div class="t" style="left:837.6px;top:290px;letter-spacing:1.00px;">Tax (%) :</div>
<div class="t" style="left:833.7px;top:316px;letter-spacing:0.54px;">Ordering :</div>
<div class="a" style="left:642px;top:261px;width:136px;height:21px;background:#c0fcc0;border:1px solid #dfeaf4;border-radius:3px;box-shadow:inset 0 0 0 1px #4b86b8,inset 0 0 0 2px #b5e8cf"></div><div class="a" style="left:646px;top:265px;width:1px;height:12px;background:#000"></div>
<div class="inp" style="left:642px;top:286px;width:136px;height:21px"></div>
<svg class="a" style="left:751px;top:290px" width="22" height="13" viewBox="0 0 22 13"><rect x="1.6" y="1.8" width="10" height="11" rx="1.5" fill="#a0a0a0" opacity=".35"/><rect x=".5" y=".5" width="10" height="11" rx="1.6" fill="#f4f7fc" stroke="#6e6464"/><rect x="2.2" y="3.1" width="7" height="6.7" fill="#b6bac2"/><rect x="2.9" y="4.0" width="1.1" height="1.1" fill="#fff"/><rect x="2.9" y="6.0" width="1.1" height="1.1" fill="#fff"/><rect x="2.9" y="8.0" width="1.1" height="1.1" fill="#fff"/><rect x="4.9" y="4.0" width="1.1" height="1.1" fill="#fff"/><rect x="4.9" y="6.0" width="1.1" height="1.1" fill="#fff"/><rect x="4.9" y="8.0" width="1.1" height="1.1" fill="#fff"/><rect x="7.0" y="4.0" width="1.1" height="1.1" fill="#fff"/><rect x="7.0" y="6.0" width="1.1" height="1.1" fill="#fff"/><rect x="7.0" y="8.0" width="1.1" height="1.1" fill="#fff"/><path d="M8.2 9.4h2.2L8.2 11.6z" fill="#6e6464"/><path d="M13 4h7.2l-3.6 4.2z" fill="#3b5582"/></svg>
<div class="t" style="left:644.1px;top:291px;letter-spacing:0.28px;">16/12/2019</div>
<div class="inp" style="left:642px;top:312px;width:136px;height:21px"></div>
<svg class="a" style="left:751px;top:316px" width="22" height="13" viewBox="0 0 22 13"><rect x="1.6" y="1.8" width="10" height="11" rx="1.5" fill="#a0a0a0" opacity=".35"/><rect x=".5" y=".5" width="10" height="11" rx="1.6" fill="#f4f7fc" stroke="#6e6464"/><rect x="2.2" y="3.1" width="7" height="6.7" fill="#b6bac2"/><rect x="2.9" y="4.0" width="1.1" height="1.1" fill="#fff"/><rect x="2.9" y="6.0" width="1.1" height="1.1" fill="#fff"/><rect x="2.9" y="8.0" width="1.1" height="1.1" fill="#fff"/><rect x="4.9" y="4.0" width="1.1" height="1.1" fill="#fff"/><rect x="4.9" y="6.0" width="1.1" height="1.1" fill="#fff"/><rect x="4.9" y="8.0" width="1.1" height="1.1" fill="#fff"/><rect x="7.0" y="4.0" width="1.1" height="1.1" fill="#fff"/><rect x="7.0" y="6.0" width="1.1" height="1.1" fill="#fff"/><rect x="7.0" y="8.0" width="1.1" height="1.1" fill="#fff"/><path d="M8.2 9.4h2.2L8.2 11.6z" fill="#6e6464"/><path d="M13 4h7.2l-3.6 4.2z" fill="#3b5582"/></svg>
<div class="t" style="left:644.1px;top:317px;letter-spacing:0.28px;">16/12/2019</div>
<div class="combo" style="left:642px;top:338px;width:136px;height:21px"></div><div class="arr" style="left:765px;top:348px"></div>
<div class="t" style="left:645.4px;top:342px;letter-spacing:0.53px;">&lt;-- Select Tax --&gt;</div>
<div class="gbtn" style="left:779px;top:336px;width:42px;height:25px"></div>
<div class="t" style="left:790.1px;top:342px;letter-spacing:1.00px;color:#127012;">Tax</div>
<svg class="a" style="left:0;top:0" width="0" height="0"><defs><radialGradient id="rg" cx=".4" cy=".35" r=".7"><stop offset="0" stop-color="#9be4ff"/><stop offset=".4" stop-color="#2393d4"/><stop offset="1" stop-color="#0c4278"/></radialGradient><linearGradient id="rb" x1="0" y1="0" x2="1" y2="1"><stop offset="0" stop-color="#d8d8dc"/><stop offset="1" stop-color="#fdfdfd"/></linearGradient></defs></svg>
<svg class="a" style="left:899px;top:266px" width="14" height="14" viewBox="0 0 14 14"><circle cx="7" cy="7" r="5.6" fill="url(#rb)" stroke="#8a8c8e" stroke-width="1"/><circle cx="7" cy="7" r="3.2" fill="url(#rg)" stroke="#1a426e" stroke-width="1.1"/></svg>
<svg class="a" style="left:962px;top:266px" width="14" height="14" viewBox="0 0 14 14"><circle cx="7" cy="7" r="5.6" fill="url(#rb)" stroke="#8a8c8e" stroke-width="1"/></svg>
<div class="t" style="left:919.6px;top:267px;letter-spacing:0.08px;">Apply</div>
<div class="t" style="left:981.8px;top:267px;letter-spacing:0.26px;">Dont Apply</div>
<div class="inp" style="left:900px;top:286px;width:151px;height:21px"></div><div class="inp" style="left:900px;top:312px;width:151px;height:21px"></div>
<div class="a" style="left:883px;top:342px;width:13px;height:13px;border:1px solid #8e8f8f;background:linear-gradient(135deg,#d4d4d4,#fdfdfd);box-shadow:inset 0 0 0 1px #f4f4f4"></div>
<div class="t" style="left:902.1px;top:343px;letter-spacing:0.18px;">Calculate on Net Amount</div>
<div class="t" style="left:526.7px;top:379px;letter-spacing:0.43px;">Search :</div>
<div class="inp" style="left:578px;top:374px;width:156px;height:21px"></div>
<div class="gbtn" style="left:930px;top:372px;width:70px;height:25px"></div><div class="gbtn" style="left:1006px;top:372px;width:70px;height:25px"></div>
<div class="t" style="left:955.7px;top:378px;letter-spacing:1.30px;color:#127012;">Ok</div>
<div class="t" style="left:1020.8px;top:378px;letter-spacing:0.66px;color:#127012;">Cancel</div>
<div class="a" style="left:521px;top:403px;width:558px;height:260px;background:#f7f7f7;border-top:1px solid #a0a0a0;border-left:1px solid #a0a0a0;overflow:hidden">
<div class="a" style="left:0;top:0;width:557px;height:17px;background:#dce6ee;border-bottom:1px solid #a0a0a0"></div>
<div class="dhs" style="left:29px"></div>
<div class="dhs" style="left:139px"></div>
<div class="dhs" style="left:219px"></div>
<div class="dhs" style="left:298px"></div>
<div class="dhs" style="left:398px"></div>
<div class="dhs" style="left:477px"></div>
<div class="dhs" style="left:545px"></div>
<div class="dhs" style="left:605px"></div>
<div class="dc" style="left:0;top:17px;width:30px;background:#c0fcc0;border-bottom-color:#a0a0a0;box-shadow:inset 1px 1px 0 #d8ffd8"></div>
<div class="a" style="left:5px;top:23px;width:0;height:0;border-top:5px solid transparent;border-bottom:5px solid transparent;border-left:5.5px solid #222"></div>
<div class="dc" style="left:30px;top:17px;width:110px;background:#c0fcc0"></div>
<div class="dc" style="left:140px;top:17px;width:80px;background:#c0fcc0"></div>
<div class="dc" style="left:220px;top:17px;width:79px;background:#c0fcc0"></div>
<div class="dc" style="left:299px;top:17px;width:100px;background:#c0fcc0"></div>
<div class="dc" style="left:399px;top:17px;width:79px;background:#c0fcc0"></div>
<div class="dc" style="left:478px;top:17px;width:68px;background:#c0fcc0"></div>
<div class="dc" style="left:546px;top:17px;width:60px;background:#c0fcc0"></div>
<div class="dc" style="left:0;top:39px;width:30px;background:#dce6ee;border-bottom-color:#a0a0a0;box-shadow:inset 1px 1px 0 #fff"></div>
<div class="dc" style="left:30px;top:39px;width:110px;background:#fff"></div>
<div class="dc" style="left:140px;top:39px;width:80px;background:#fff"></div>
<div class="dc" style="left:220px;top:39px;width:79px;background:#fff"></div>
<div class="dc" style="left:299px;top:39px;width:100px;background:#fff"></div>
<div class="dc" style="left:399px;top:39px;width:79px;background:#fff"></div>
<div class="dc" style="left:478px;top:39px;width:68px;background:#fff"></div>
<div class="dc" style="left:546px;top:39px;width:60px;background:#fff"></div>
<div class="dc" style="left:0;top:61px;width:30px;background:#dce6ee;border-bottom-color:#a0a0a0;box-shadow:inset 1px 1px 0 #fff"></div>
<div class="dc" style="left:30px;top:61px;width:110px;background:#fff"></div>
<div class="dc" style="left:140px;top:61px;width:80px;background:#fff"></div>
<div class="dc" style="left:220px;top:61px;width:79px;background:#fff"></div>
<div class="dc" style="left:299px;top:61px;width:100px;background:#fff"></div>
<div class="dc" style="left:399px;top:61px;width:79px;background:#fff"></div>
<div class="dc" style="left:478px;top:61px;width:68px;background:#fff"></div>
<div class="dc" style="left:546px;top:61px;width:60px;background:#fff"></div>
<div class="dc" style="left:0;top:83px;width:30px;background:#dce6ee;border-bottom-color:#a0a0a0;box-shadow:inset 1px 1px 0 #fff"></div>
<div class="dc" style="left:30px;top:83px;width:110px;background:#fff"></div>
<div class="dc" style="left:140px;top:83px;width:80px;background:#fff"></div>
<div class="dc" style="left:220px;top:83px;width:79px;background:#fff"></div>
<div class="dc" style="left:299px;top:83px;width:100px;background:#fff"></div>
<div class="dc" style="left:399px;top:83px;width:79px;background:#fff"></div>
<div class="dc" style="left:478px;top:83px;width:68px;background:#fff"></div>
<div class="dc" style="left:546px;top:83px;width:60px;background:#fff"></div>
<div class="dc" style="left:0;top:105px;width:30px;background:#dce6ee;border-bottom-color:#a0a0a0;box-shadow:inset 1px 1px 0 #fff"></div>
<div class="dc" style="left:30px;top:105px;width:110px;background:#fff"></div>
<div class="dc" style="left:140px;top:105px;width:80px;background:#fff"></div>
<div class="dc" style="left:220px;top:105px;width:79px;background:#fff"></div>
<div class="dc" style="left:299px;top:105px;width:100px;background:#fff"></div>
<div class="dc" style="left:399px;top:105px;width:79px;background:#fff"></div>
<div class="dc" style="left:478px;top:105px;width:68px;background:#fff"></div>
<div class="dc" style="left:546px;top:105px;width:60px;background:#fff"></div>
<div class="a" style="left:0;top:243px;width:558px;height:17px;background:#eeeeee;border-top:1px solid #f3f3f3"></div>
<div class="a" style="left:6px;top:247px;width:0;height:0;border-top:4px solid transparent;border-bottom:4px solid transparent;border-right:4px solid #7a7a7a"></div>
<div class="a" style="left:547px;top:247px;width:0;height:0;border-top:4px solid transparent;border-bottom:4px solid transparent;border-left:4px solid #7a7a7a"></div>
<div class="t" style="left:551.5px;top:5px">Ordering</div>
</div>
<div class="t" style="left:558.7px;top:407px;letter-spacing:0.55px;">TaxName</div>
<div class="t" style="left:667.9px;top:407px;letter-spacing:0.25px;">StartDate</div>
<div class="t" style="left:747.8px;top:407px;letter-spacing:0.17px;">EndDate</div>
<div class="t" style="left:826.6px;top:407px;letter-spacing:0.52px;">ParentTaxName</div>
<div class="t" style="left:927.9px;top:407px;letter-spacing:0.39px;">TaxStatus</div>
<div class="t" style="left:1006.6px;top:407px;letter-spacing:1.30px;">Tax%</div>
<div class="t" style="left:533.6px;top:426px;">1</div>
<div class="t" style="left:554.7px;top:426px;letter-spacing:0.66px;color:#127012;">Service Tax</div>
<div class="t" style="left:665.0px;top:426px;letter-spacing:0.30px;color:#127012;">01/04/2016</div>
<div class="t" style="left:745.1px;top:426px;letter-spacing:0.30px;color:#127012;">30/06/2017</div>
<div class="t" style="left:924.7px;top:426px;letter-spacing:0.05px;color:#127012;">Apply</div>
<div class="t" style="left:1036.9px;top:426px;letter-spacing:0.30px;color:#127012;">8.40</div>
<div class="t" style="left:533.6px;top:448px;">2</div>
<div class="t" style="left:554.7px;top:448px;letter-spacing:1.07px;">SGST</div>
<div class="t" style="left:665.0px;top:448px;letter-spacing:0.30px;">01/04/2018</div>
<div class="t" style="left:745.1px;top:448px;letter-spacing:0.30px;">31/03/2020</div>
<div class="t" style="left:924.7px;top:448px;letter-spacing:0.05px;">Apply</div>
<div class="t" style="left:1036.9px;top:448px;letter-spacing:0.30px;">9.00</div>
<div class="t" style="left:533.6px;top:470px;">3</div>
<div class="t" style="left:554.7px;top:470px;letter-spacing:0.51px;">Swach Bharat T...</div>
<div class="t" style="left:665.0px;top:470px;letter-spacing:0.30px;">01/04/2016</div>
<div class="t" style="left:745.1px;top:470px;letter-spacing:0.30px;">30/06/2017</div>
<div class="t" style="left:924.7px;top:470px;letter-spacing:0.05px;">Apply</div>
<div class="t" style="left:1036.9px;top:470px;letter-spacing:0.30px;">0.30</div>
<div class="t" style="left:534.6px;top:492px;">4</div>
<div class="t" style="left:554.7px;top:492px;letter-spacing:0.47px;">Krishi Kalyan C...</div>
<div class="t" style="left:665.0px;top:492px;letter-spacing:0.30px;">01/06/2016</div>
<div class="t" style="left:745.1px;top:492px;letter-spacing:0.30px;">30/06/2017</div>
<div class="t" style="left:924.7px;top:492px;letter-spacing:0.05px;">Apply</div>
<div class="t" style="left:1036.9px;top:492px;letter-spacing:0.30px;">0.30</div>
<div class="t" style="left:533.6px;top:514px;">5</div>
<div class="t" style="left:554.7px;top:514px;letter-spacing:1.03px;">CGST</div>
<div class="t" style="left:665.0px;top:514px;letter-spacing:0.30px;">01/04/2018</div>
<div class="t" style="left:745.1px;top:514px;letter-spacing:0.30px;">31/03/2019</div>
<div class="t" style="left:924.7px;top:514px;letter-spacing:0.05px;">Apply</div>
<div class="t" style="left:1036.9px;top:514px;letter-spacing:0.30px;">9.00</div>
</section>
</body></html>
